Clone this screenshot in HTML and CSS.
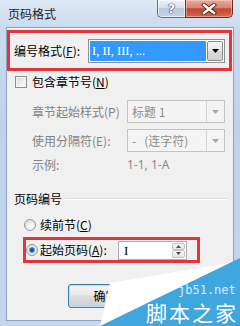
FILE: index.html
```html
<!DOCTYPE html>
<html lang="zh">
<head>
<meta charset="utf-8">
<link rel="stylesheet" href="styles.css">
</head>
<body>
<div class="window">
  <div class="titlebar">
    <span class="title">页码格式</span>
    <div class="caption">
      <div class="cap-btn help"><span>?</span></div>
      <div class="cap-btn close">
        <svg width="16" height="12" viewBox="0 0 16 12"><path d="M3 2 L13 10 M13 2 L3 10" stroke="#5a2019" stroke-width="4.2" stroke-linecap="square" fill="none"/><path d="M3 2 L13 10 M13 2 L3 10" stroke="#ffffff" stroke-width="2.4" stroke-linecap="square" fill="none"/></svg>
      </div>
    </div>
  </div>
  <div class="client">
    <div class="mark mark-format">
      <span class="lbl">编号格式(<u>F</u>):</span>
      <div class="combo active">
        <span class="sel">I, II, III, ...</span>
        <span class="drop"><svg width="7" height="4" viewBox="0 0 7 4"><path d="M0 0 H7 L3.5 4 Z" fill="#000"/></svg></span>
      </div>
    </div>

    <div class="row check-row">
      <span class="checkbox"></span>
      <span>包含章节号(<u>N</u>)</span>
    </div>

    <div class="sub sub-first">
      <span class="sub-lbl">章节起始样式(P)</span>
      <div class="combo disabled">
        <span class="val">标题 1</span>
        <span class="drop"><svg width="7" height="4" viewBox="0 0 7 4"><path d="M0 0 H7 L3.5 4 Z" fill="#a9a9a9"/></svg></span>
      </div>
    </div>
    <div class="sub sub-second">
      <span class="sub-lbl">使用分隔符(E):</span>
      <div class="combo disabled">
        <span class="val">-&nbsp;&nbsp;&nbsp;(连字符)</span>
        <span class="drop"><svg width="7" height="4" viewBox="0 0 7 4"><path d="M0 0 H7 L3.5 4 Z" fill="#a9a9a9"/></svg></span>
      </div>
    </div>
    <div class="sub sub-example">
      <span class="sub-lbl">示例:</span>
      <span class="example">1-1, 1-A</span>
    </div>

    <div class="group-head">
      <span>页码编号</span>
      <span class="etch"></span>
    </div>

    <div class="row radio-row">
      <span class="radio"></span>
      <span>续前节(<u>C</u>)</span>
    </div>

    <div class="mark mark-start">
      <span class="radio on"></span>
      <span class="start-lbl">起始页码(<u>A</u>):</span>
      <div class="spin">
        <span class="spin-val">I</span>
        <span class="spin-btns">
          <span class="spin-b"><svg width="5" height="3" viewBox="0 0 5 3"><path d="M0 3 H5 L2.5 0 Z" fill="#4d4d4d"/></svg></span>
          <span class="spin-b"><svg width="5" height="3" viewBox="0 0 5 3"><path d="M0 0 H5 L2.5 3 Z" fill="#4d4d4d"/></svg></span>
        </span>
      </div>
    </div>

    <div class="buttons">
      <div class="btn default">确定</div>
    </div>
  </div>

  <div class="watermark">
    <svg width="140" height="70" viewBox="0 0 140 70">
      <polygon points="10,27 140,5 140,70 0,70" fill="#ffffff"/>
      <polygon points="140,2 140,70 0,70" fill="#3fa6de"/>
    </svg>
    <span class="wm-url">jb51.net</span>
    <span class="wm-name">脚本之家</span>
  </div>
</div>
</body>
</html>
```

FILE: styles.css
```css
html, body {
  margin: 0;
  padding: 0;
  overflow: hidden;
}

.window {
  position: relative;
  width: 240px;
  height: 326px;
  overflow: hidden;
  display: flex;
  flex-direction: column;
  background: linear-gradient(180deg, #dde8f5 0px, #c9dbee 28px, #bed3ea 120px, #c2d6ec 326px);
  font-family: "Noto Sans CJK SC", "Microsoft YaHei", sans-serif;
  font-size: 12px;
  color: #000;
}

.titlebar {
  height: 28px;
  display: flex;
  align-items: flex-start;
  flex-shrink: 0;
}

.title {
  padding: 6px 0 0 8px;
  line-height: 16px;
  font-size: 12px;
  color: #1a1a1a;
}

.caption {
  margin-left: auto;
  margin-right: 7px;
  display: flex;
}

.cap-btn {
  height: 18px;
  box-sizing: border-box;
  display: flex;
  align-items: center;
  justify-content: center;
  border: 1px solid #5d7088;
  border-top: none;
}

.help {
  width: 28px;
  border-right: none;
  border-radius: 0 0 0 5px;
  background: linear-gradient(180deg, #eef3f9 0%, #d5e0ec 45%, #bccbdc 50%, #c3d3e5 100%);
  box-shadow: inset 0 0 0 1px rgba(255,255,255,0.6);
}

.help span {
  font-family: "DejaVu Sans", sans-serif;
  font-weight: bold;
  font-size: 13px;
  line-height: 14px;
  color: #ffffff;
  text-shadow: 0 0 1px #2b3a4d, 0 0 1px #2b3a4d, 0 0 1px #2b3a4d;
}

.close {
  width: 48px;
  border-color: #6a2e27;
  border-radius: 0 0 5px 0;
  background: linear-gradient(180deg, #e7aa9e 0%, #d98370 45%, #c4452f 52%, #d2674f 100%);
  box-shadow: inset 0 0 0 1px rgba(255,220,210,0.45);
}

.close svg {
  display: block;
}

.client {
  flex: 1;
  margin: 0 7px 6px 7px;
  background: #f0f0f0;
  box-shadow: 0 0 0 1px #8da3bd;
  position: relative;
}

.mark {
  box-sizing: border-box;
  border: 3px solid #e3353b;
  display: flex;
  align-items: center;
}

.mark-format {
  margin-top: 2px;
  width: 225px;
  height: 41px;
  padding: 0 4px;
}

.lbl {
  line-height: 16px;
}

.combo {
  box-sizing: border-box;
  display: flex;
  margin-left: auto;
}

.combo.active {
  width: 137px;
  height: 24px;
  border: 1px solid #8a8f95;
  background: #fff;
  padding: 1px;
}

.combo.active .sel {
  flex: 1;
  background: #3399ff;
  color: #fff;
  font-family: "Liberation Serif", serif;
  font-size: 12.5px;
  line-height: 20px;
  padding-left: 2px;
  margin-right: 1px;
}

.combo.active .drop {
  width: 16px;
  box-sizing: border-box;
  border: 1px solid #8a8a8a;
  border-radius: 2px;
  background: linear-gradient(180deg, #f6f6f6 0%, #e8e8e8 50%, #dadada 51%, #d2d2d2 100%);
  display: flex;
  align-items: center;
  justify-content: center;
}

.drop svg {
  display: block;
}

.row {
  display: flex;
  align-items: center;
  line-height: 16px;
}

.check-row {
  margin-top: 3px;
  padding-left: 8px;
  gap: 5px;
}

.checkbox {
  width: 12px;
  height: 12px;
  box-sizing: border-box;
  border: 1px solid #8e8f8f;
  background: linear-gradient(135deg, #d8d8d8 0%, #f0f0f0 60%, #fbfbfb 100%);
  box-shadow: inset 0 0 0 1px #f4f4f4;
}

.sub {
  display: flex;
  align-items: center;
  padding-left: 25px;
  color: #838383;
  line-height: 16px;
}

.sub-lbl {
  width: 95px;
}

.sub-first {
  margin-top: 10px;
}

.sub-second {
  margin-top: 6px;
}

.sub-example {
  margin-top: 5px;
}

.combo.disabled {
  margin-left: 0;
  width: 98px;
  height: 23px;
  border: 1px solid #c3c3c3;
  background: #f4f4f4;
}

.combo.disabled .val {
  flex: 1;
  padding-left: 4px;
  line-height: 21px;
  color: #8c8c8c;
  font-family: "Noto Sans CJK SC", sans-serif;
}

.combo.disabled .drop {
  width: 17px;
  border-left: 1px solid #d4d4d4;
  background: #f4f4f4;
  display: flex;
  align-items: center;
  justify-content: center;
}

.example {
  color: #8c8c8c;
  font-family: "Noto Sans", "Liberation Sans", sans-serif;
}

.group-head {
  margin-top: 18px;
  padding: 0 6px 0 7px;
  display: flex;
  align-items: center;
  gap: 3px;
  line-height: 16px;
}

.etch {
  flex: 1;
  height: 1px;
  background: #dcdcdc;
  border-bottom: 1px solid #ffffff;
  margin-top: -1px;
}

.radio-row {
  margin-top: 10px;
  padding-left: 17px;
  gap: 4px;
}

.radio {
  width: 12px;
  height: 12px;
  box-sizing: border-box;
  border-radius: 50%;
  border: 1px solid #9a9a9a;
  background: radial-gradient(circle at 60% 65%, #fdfdfd 0%, #e9e9e9 50%, #cfcfcf 100%);
  flex-shrink: 0;
}

.radio.on {
  background: radial-gradient(circle at 50% 50%, #0c3f82 0%, #1e6fc8 28%, #7cb4ec 40%, #e8e8e8 48%, #d2d2d2 100%);
}

.mark-start {
  margin: 4px 0 0 16px;
  width: 177px;
  height: 26px;
  padding: 0 10px 0 0;
}

.start-lbl {
  margin-left: 2px;
  line-height: 16px;
}

.spin {
  margin-left: auto;
  width: 69px;
  height: 19px;
  box-sizing: border-box;
  border: 1px solid #abadb3;
  background: #fff;
  display: flex;
}

.spin-val {
  flex: 1;
  font-family: "Liberation Serif", serif;
  font-size: 13px;
  line-height: 17px;
  padding-left: 5px;
}

.spin-btns {
  width: 15px;
  display: flex;
  flex-direction: column;
  padding: 1px;
  box-sizing: border-box;
  gap: 0;
}

.spin-b {
  flex: 1;
  box-sizing: border-box;
  border: 1px solid #c5c5c5;
  border-radius: 2px;
  background: linear-gradient(180deg, #f7f7f7, #e4e4e4);
  display: flex;
  align-items: center;
  justify-content: center;
}

.spin-b svg {
  display: block;
}

.buttons {
  margin-top: 21px;
  padding-left: 61px;
  display: flex;
}

.btn {
  width: 75px;
  height: 24px;
  box-sizing: border-box;
  border: 1px solid #3c7fb1;
  border-radius: 3px;
  background: linear-gradient(180deg, #f4f4f4 0%, #ebebeb 45%, #dddddd 50%, #cfcfcf 100%);
  box-shadow: inset 0 0 0 1px #b4dcf3;
  text-align: center;
  line-height: 22px;
}

.watermark {
  position: absolute;
  right: 0;
  bottom: 0;
  width: 140px;
  height: 70px;
}

.watermark svg {
  position: absolute;
  left: 0;
  top: 0;
  display: block;
}

.wm-url {
  position: absolute;
  left: 78px;
  top: 29px;
  font-family: "DejaVu Sans Mono", monospace;
  font-size: 12px;
  line-height: 11px;
  color: #d8ecf8;
  white-space: nowrap;
}

.wm-name {
  position: absolute;
  left: 46px;
  top: 46px;
  font-family: "Noto Sans CJK SC", sans-serif;
  font-size: 21px;
  line-height: 20px;
  letter-spacing: 2px;
  color: #ffffff;
  white-space: nowrap;
}
```
